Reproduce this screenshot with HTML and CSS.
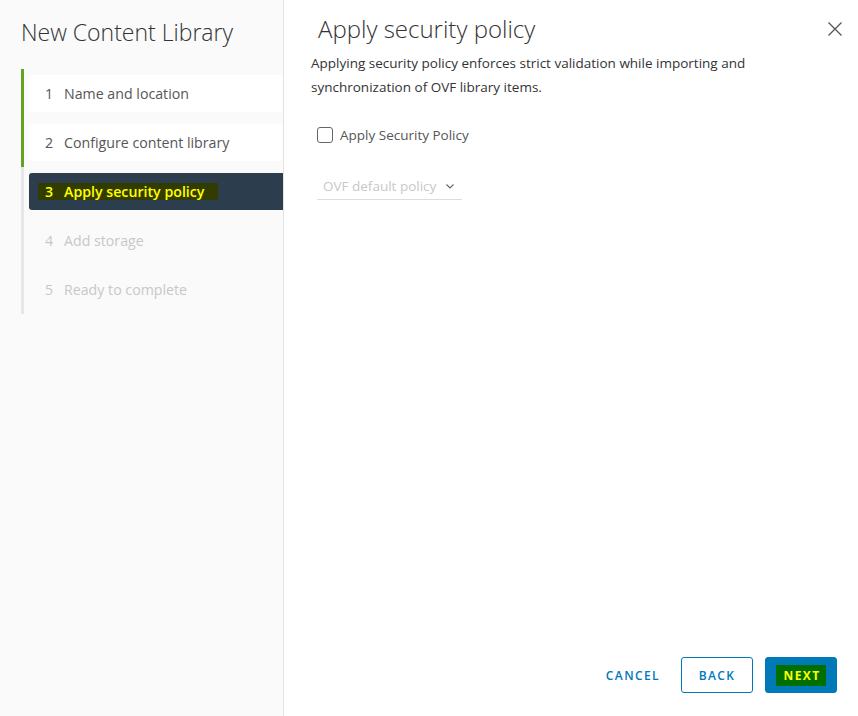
FILE: index.html
```html
<!DOCTYPE html>
<html lang="en">

<head>
    <meta charset="UTF-8">
    <meta name="viewport" content="width=device-width, initial-scale=1.0">
    <title>New Content Library</title>
    <link rel="stylesheet" href="styles.css">
</head>

<body>
    <div class="wizard">

        <!-- Sol menü: adımlar -->
        <aside class="wizard-nav">
            <h1 class="wizard-title">New Content Library</h1>
            <ul class="steps">
                <li class="step done"><div class="step-box"><span class="step-num">1</span>Name and location</div></li>
                <li class="step done"><div class="step-box"><span class="step-num">2</span>Configure content library</div></li>
                <li class="step active"><div class="step-box"><span class="mark"><span class="step-num">3</span>Apply security policy</span></div></li>
                <li class="step"><div class="step-box"><span class="step-num">4</span>Add storage</div></li>
                <li class="step"><div class="step-box"><span class="step-num">5</span>Ready to complete</div></li>
            </ul>
        </aside>

        <!-- İçerik -->
        <main class="wizard-body">
            <div class="body-header">
                <h2 class="body-title">Apply security policy</h2>
                <button class="close-btn" aria-label="Close">
                    <svg width="16" height="16" viewBox="0 0 16 16">
                        <path d="M1.5 1.5 L14.5 14.5 M14.5 1.5 L1.5 14.5" stroke="#555" stroke-width="1.3" fill="none" />
                    </svg>
                </button>
            </div>

            <p class="body-text">Applying security policy enforces strict validation while importing and synchronization of OVF library items.</p>

            <label class="check-row">
                <input type="checkbox">
                <span>Apply Security Policy</span>
            </label>

            <div class="select-box">
                <span>OVF default policy</span>
                <svg width="10" height="10" viewBox="0 0 10 10">
                    <path d="M1.5 3.5 L5 7 L8.5 3.5" stroke="#666" stroke-width="1.1" fill="none" />
                </svg>
            </div>

            <div class="footer">
                <button class="btn btn-link">CANCEL</button>
                <button class="btn btn-outline">BACK</button>
                <button class="btn btn-primary"><span class="mark-green">NEXT</span></button>
            </div>
        </main>

    </div>
</body>

</html>
```

FILE: styles.css
```css
body {
    margin: 0;
    font-family: "Open Sans", Arial, sans-serif;
    color: #333;
    background-color: #fff;
}

.wizard {
    display: flex;
    height: 716px;
}

/* Sol menü */
.wizard-nav {
    width: 284px;
    flex-shrink: 0;
    background-color: #fafafa;
    border-right: 1px solid #e2e2e2;
    padding-left: 21px;
    box-sizing: border-box;
}

.wizard-title {
    margin: 17px 0 22px;
    font-size: 23px;
    font-weight: 300;
    line-height: 30px;
    color: #333;
}

.steps {
    list-style: none;
    margin: 0;
    padding: 0;
}

    .step {
        border-left: 3px solid #e6e6e6;
        padding: 6px 0;
    }

        .step.done {
            border-left-color: #62a420;
        }

    .step-box {
        margin-left: 5px;
        height: 37px;
        display: flex;
        align-items: center;
        padding-left: 16px;
        border-radius: 3px 0 0 3px;
        font-size: 14.2px;
        color: #c8c8c8;
    }

    .step.done .step-box {
        background-color: #fff;
        color: #565656;
    }

    .step.active .step-box {
        background-color: #2c3e4d;
        color: #ffff00;
        font-weight: 600;
    }

    .step-num {
        display: inline-block;
        width: 19px;
    }

.mark {
    display: flex;
    align-items: center;
    background-color: #323c00;
    margin-left: -7px;
    padding: 0 14px 0 7px;
    height: 17px;
}

/* İçerik */
.wizard-body {
    flex: 1;
    display: flex;
    flex-direction: column;
    padding: 0 21px 23px 27px;
}

.body-header {
    display: flex;
    justify-content: space-between;
    align-items: center;
    padding-top: 14px;
}

.body-title {
    margin: 0 0 0 7px;
    font-size: 24px;
    font-weight: 300;
    line-height: 30px;
}

.close-btn {
    background: none;
    border: none;
    padding: 0;
    margin-right: -6px;
    cursor: pointer;
    line-height: 0;
}

.body-text {
    margin: 7px 0 0;
    font-size: 13.5px;
    line-height: 24px;
    color: #333;
    max-width: 450px;
}

.check-row {
    display: flex;
    align-items: center;
    gap: 7px;
    margin: 27px 0 0 6px;
    font-size: 13.5px;
    color: #565656;
}

    .check-row input {
        margin: 0;
        width: 16px;
        height: 16px;
        appearance: none;
        border: 1px solid #666;
        border-radius: 3px;
        background-color: #fff;
    }

.select-box {
    display: flex;
    align-items: center;
    gap: 9px;
    width: 139px;
    margin: 33px 0 0 6px;
    padding: 0 0 4px 6px;
    border-bottom: 1px solid #ddd;
    font-size: 13.5px;
    color: #c8c8c8;
}

.footer {
    margin-top: auto;
    display: flex;
    justify-content: flex-end;
    align-items: center;
    gap: 12px;
}

.btn {
    height: 36px;
    padding: 0 14px;
    border-radius: 3px;
    font-family: "Open Sans", Arial, sans-serif;
    font-size: 12px;
    font-weight: 600;
    letter-spacing: 1.4px;
    cursor: pointer;
}

.btn-link {
    background: none;
    border: 1px solid transparent;
    color: #0079b8;
    padding: 0;
    margin-right: 8px;
}

.btn-outline {
    background-color: #fff;
    border: 1px solid #0079b8;
    color: #0079b8;
    width: 72px;
    padding: 0;
}

.btn-primary {
    background-color: #0079b8;
    border: 1px solid #0079b8;
    color: #ffff00;
    width: 72px;
    padding: 0;
}

.mark-green {
    display: inline-block;
    background-color: #006f00;
    padding: 2px 5px 2px 7px;
    font-weight: 700;
}
```
